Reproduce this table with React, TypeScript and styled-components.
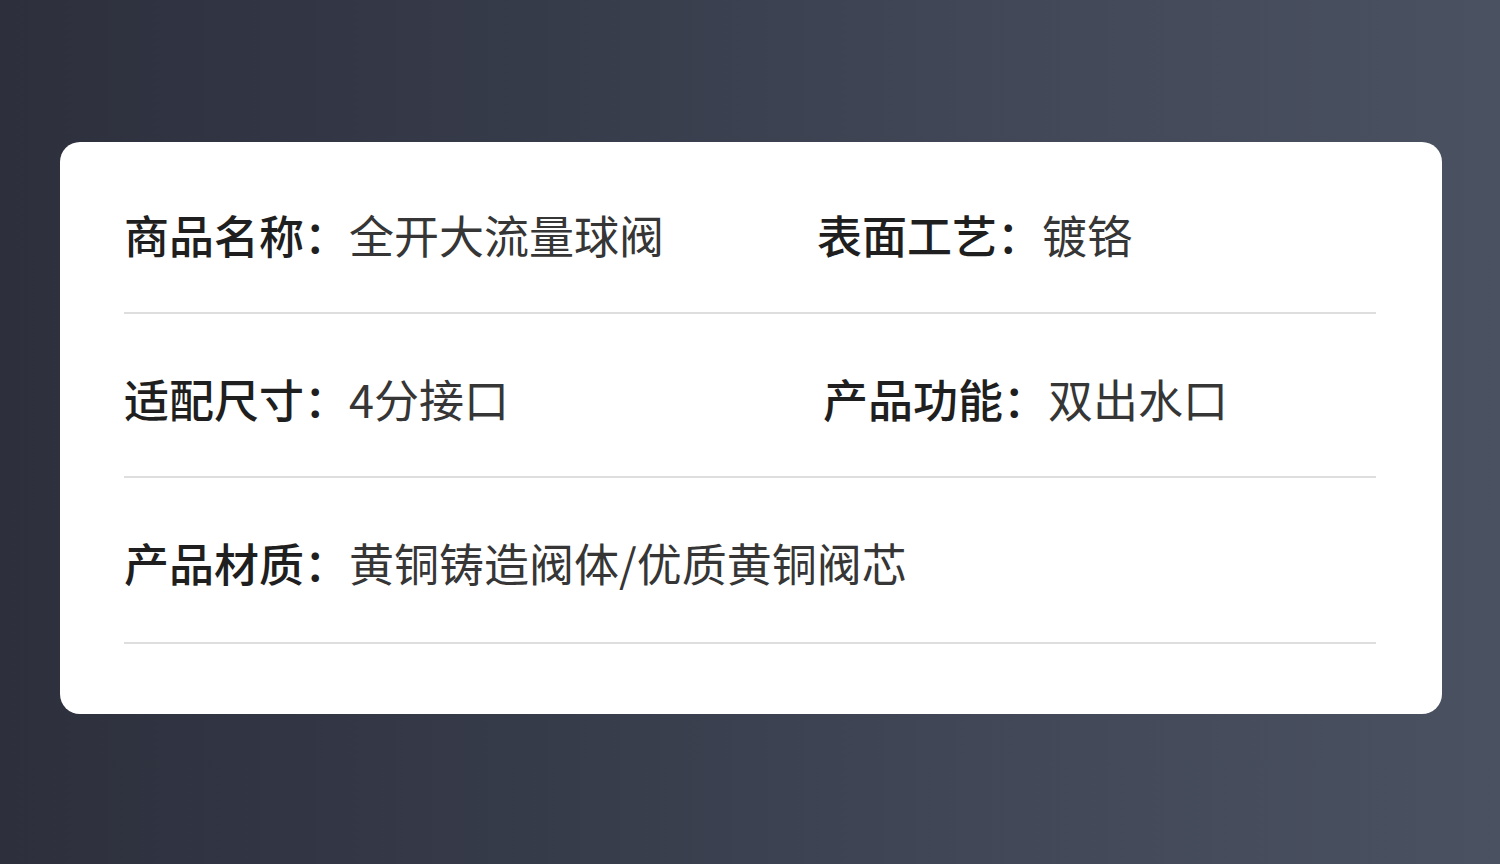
import React from "react";
import styled, { createGlobalStyle } from "styled-components";

const Global = createGlobalStyle`
  html, body { margin: 0; padding: 0; }
  body {
    width: 1500px;
    height: 864px;
    overflow: hidden;
    font-family: "Noto Sans CJK SC", "Noto Sans", sans-serif;
  }
`;

const Page = styled.div`
  width: 1500px;
  height: 864px;
  box-sizing: border-box;
  padding: 142px 58px 0 60px;
  background: linear-gradient(90deg, #2d2f3c 0%, #363b4a 35%, #414756 65%, #4a5161 100%);
`;

const Card = styled.div`
  background: #ffffff;
  border-radius: 20px;
  padding: 7px 66px 67px 64px;
  box-sizing: border-box;
  height: 572px;
`;

const Row = styled.div`
  display: grid;
  grid-template-columns: 693px 1fr;
  padding: 55px 0 47px;
  border-bottom: 2px solid #dedede;

  &:first-child {
    padding-top: 56px;
  }
  &:last-child {
    padding-bottom: 49px;
  }
`;

const Item = styled.div<{ $shift?: number }>`
  display: flex;
  align-items: center;
  height: 60px;
  padding-left: ${(p) => p.$shift ?? 0}px;
  font-size: 45px;
  line-height: 60px;
  white-space: nowrap;
`;

const Label = styled.span`
  font-weight: 500;
  color: #1f1f1f;
`;

const Value = styled.span`
  font-weight: 400;
  color: #363636;
`;

type Spec = { label: string; value: string; shift?: number };

const rows: Spec[][] = [
  [
    { label: "商品名称：", value: "全开大流量球阀" },
    { label: "表面工艺：", value: "镀铬" },
  ],
  [
    { label: "适配尺寸：", value: "4分接口" },
    { label: "产品功能：", value: "双出水口", shift: 6 },
  ],
  [{ label: "产品材质：", value: "黄铜铸造阀体/优质黄铜阀芯" }],
];

export default function App() {
  return (
    <>
      <Global />
      <Page>
        <Card>
          {rows.map((r, i) => (
            <Row key={i}>
              {r.map((s) => (
                <Item key={s.label} $shift={s.shift}>
                  <Label>{s.label}</Label>
                  <Value>{s.value}</Value>
                </Item>
              ))}
            </Row>
          ))}
        </Card>
      </Page>
    </>
  );
}
